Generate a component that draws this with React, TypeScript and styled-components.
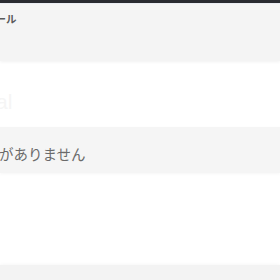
import React from "react";
import styled, { createGlobalStyle } from "styled-components";

const Global = createGlobalStyle`
  html, body { margin: 0; padding: 0; background: #ffffff; overflow: hidden; }
  body { font-family: "Noto Sans CJK JP", "Noto Sans", sans-serif; }
`;

const Page = styled.div`
  width: 280px;
  height: 280px;
  display: flex;
  flex-direction: column;
  overflow: hidden;
  background: #ffffff;
`;

const TopBar = styled.div`
  height: 3px;
  background: #2a2b30;
  border-bottom: 1px solid #eceef4;
  flex: none;
`;

const Header = styled.div`
  height: 57px;
  flex: none;
  background: #f4f4f4;
  padding-top: 8px;
  box-sizing: border-box;
  box-shadow: 0 1px 3px rgba(0, 0, 0, 0.06);
  overflow: hidden;
  white-space: nowrap;
`;

const HeaderTitle = styled.div`
  margin-left: -15px;
  font-size: 10.5px;
  font-weight: 700;
  color: #5a5a5a;
  line-height: 14px;
`;

const Panel = styled.div<{ $height: number }>`
  height: ${(p) => p.$height}px;
  flex: none;
  display: flex;
  align-items: center;
  overflow: hidden;
  white-space: nowrap;
`;

const Ghost = styled.div`
  margin-left: -4px;
  margin-top: 16px;
  font-family: "Liberation Sans", Arial, sans-serif;
  font-size: 21px;
  color: #f5f5f5;
`;

const EmptyRow = styled.div`
  height: 46px;
  flex: none;
  background: #f5f5f5;
  display: flex;
  align-items: center;
  padding-top: 6px;
  box-sizing: border-box;
  box-shadow: 0 1px 3px rgba(0, 0, 0, 0.04);
  overflow: hidden;
  white-space: nowrap;
`;

const EmptyText = styled.div`
  margin-left: -1px;
  font-size: 14.5px;
  color: #6a6a6a;
`;

const Spacer = styled.div`
  flex: 1;
`;

const Footer = styled.div`
  height: 15px;
  flex: none;
  background: #f3f3f3;
  box-shadow: 0 -1px 3px rgba(0, 0, 0, 0.03);
`;

export default function App() {
  return (
    <>
      <Global />
      <Page>
        <TopBar />
        <Header>
          <HeaderTitle>メール</HeaderTitle>
        </Header>
        <Panel $height={66}>
          <Ghost>al</Ghost>
        </Panel>
        <EmptyRow>
          <EmptyText>がありません</EmptyText>
        </EmptyRow>
        <Spacer />
        <Footer />
      </Page>
    </>
  );
}
